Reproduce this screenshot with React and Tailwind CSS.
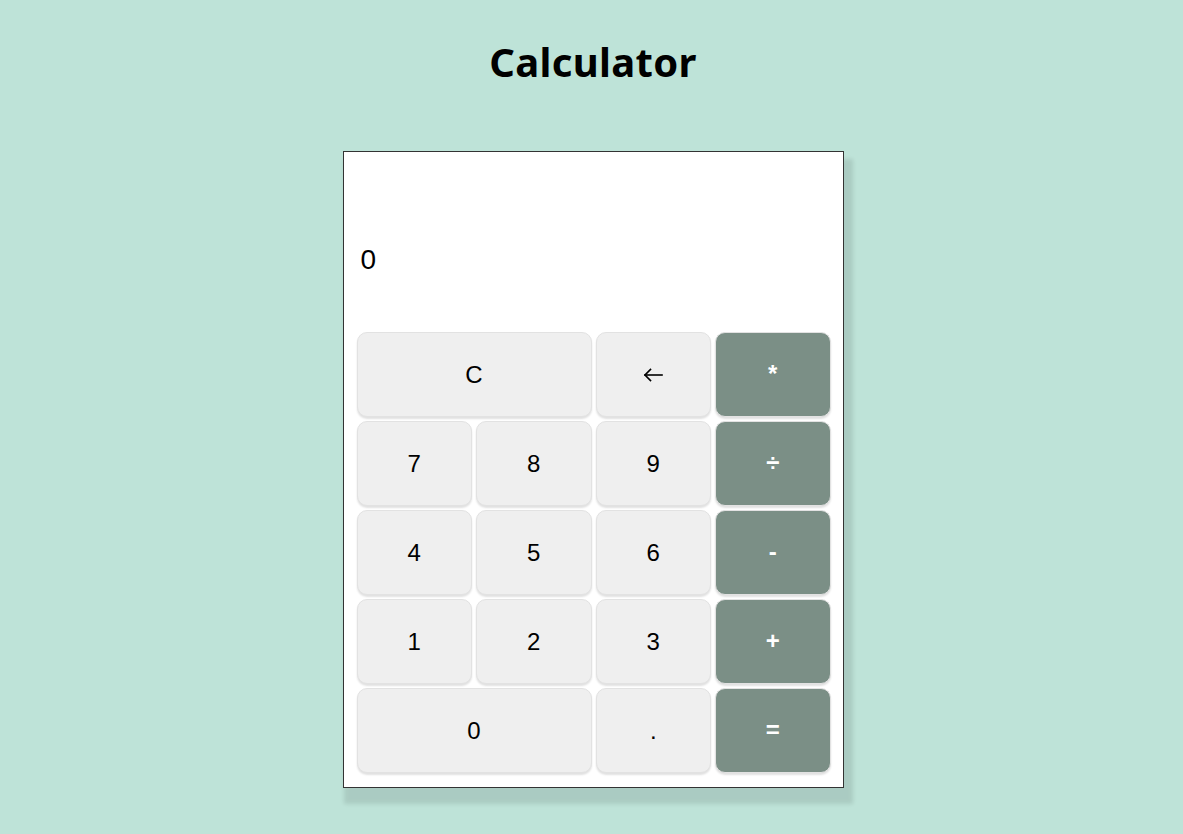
import React from 'react';

const ArrowLeftIcon = () => (
  <svg width="20" height="14" viewBox="0 0 20 14" fill="none" stroke="black" strokeWidth="1.6" strokeLinecap="square">
    <path d="M2 7h17" />
    <path d="M7.5 1.5L2 7l5.5 5.5" />
  </svg>
);

const rows = [
  [{ label: 'C', span: 2 }, { label: <ArrowLeftIcon /> }, { label: '*', op: true }],
  [{ label: '7' }, { label: '8' }, { label: '9' }, { label: '÷', op: true }],
  [{ label: '4' }, { label: '5' }, { label: '6' }, { label: '-', op: true }],
  [{ label: '1' }, { label: '2' }, { label: '3' }, { label: '+', op: true }],
  [{ label: '0', span: 2 }, { label: '.' }, { label: '=', op: true }],
];

const Key = ({ label, span, op }) => (
  <button
    className={`h-[85px] rounded-[10px] border border-[#e2e2e2] shadow-[0_2px_2px_rgba(0,0,0,0.12)] flex items-center justify-center text-[24px] ${
      span === 2 ? 'col-span-2' : ''
    } ${op ? 'bg-[#7b8f86] text-white font-bold pb-[2px]' : 'bg-[#efefef] text-black'}`}
  >
    {label}
  </button>
);

export default function App() {
  return (
    <div
      className="min-h-[834px] bg-[#bee3d8] flex flex-col items-center pl-[3px]"
      style={{ fontFamily: '"Liberation Sans", Arial, sans-serif' }}
    >
      <h1
        className="mt-[34px] text-[40px] font-bold text-black leading-[56px] tracking-[0.3px]"
        style={{ fontFamily: '"Noto Sans", sans-serif' }}
      >
        Calculator
      </h1>
      <div className="mt-[61px] w-[501px] bg-white border border-[#333] shadow-[5px_12px_4px_4px_rgba(0,0,0,0.1)] pl-[13px] pr-[12px] pb-[14px]">
        <div className="h-[180px] flex items-center px-[4px] pt-[36px] text-[28px] text-black">0</div>
        <div className="grid grid-cols-4 gap-[4px]">
          {rows.flat().map((k, i) => (
            <Key key={i} {...k} />
          ))}
        </div>
      </div>
    </div>
  );
}
